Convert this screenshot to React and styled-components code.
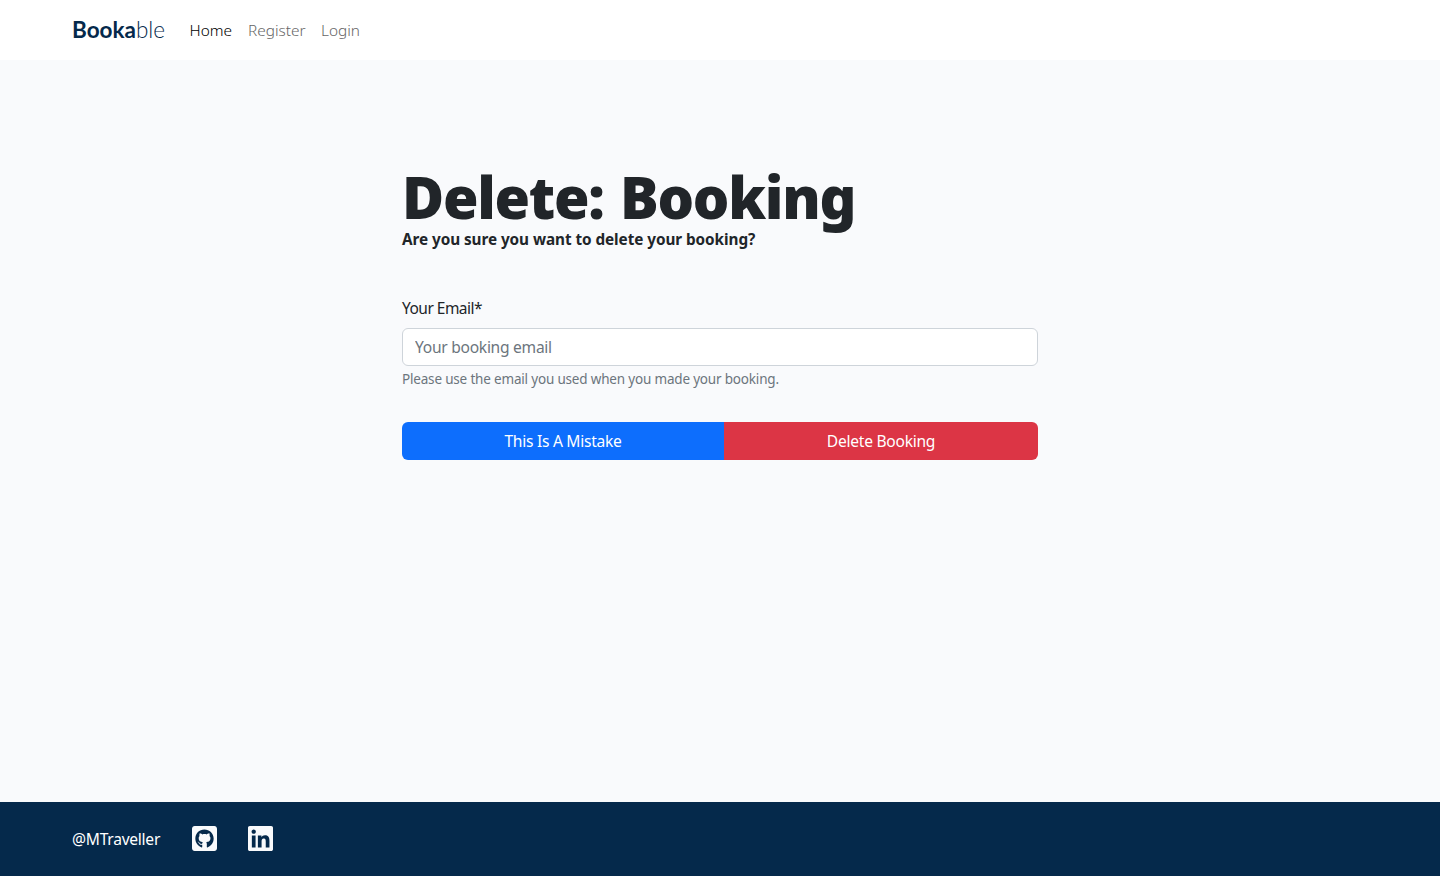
import React from "react";
import styled, { createGlobalStyle } from "styled-components";
import { FaGithubSquare, FaLinkedin } from "react-icons/fa";

const GlobalStyle = createGlobalStyle`
  *, *::before, *::after { box-sizing: border-box; }
  body {
    margin: 0;
    background: #f9fafc;
    color: #212529;
    font-family: "Segoe UI", "Noto Sans", sans-serif;
    font-size: 15.6px;
    line-height: 24px;
  }
`;

const Page = styled.div`
  min-height: 100vh;
  display: flex;
  flex-direction: column;
`;

const Container = styled.div`
  width: 1320px;
  margin: 0 auto;
  padding: 0 12px;
  display: flex;
  align-items: center;
`;

const Header = styled.header`
  height: 60px;
  display: flex;
  background: #fff;
`;

const Brand = styled.a`
  width: 93px;
  margin-right: 16.5px;
  color: #05294b;
  font-family: Lato, sans-serif;
  font-size: 22.5px;
  font-weight: 700;
  line-height: 34px;
  white-space: nowrap;
`;

const BrandLight = styled.span`
  font-weight: 300;
`;

const Nav = styled.nav`
  display: flex;
`;

const NavLink = styled.a`
  width: ${(p) => p.$width}px;
  padding: 9px 8px 7px;
  white-space: nowrap;
  font-size: 15.4px;
  font-weight: 300;
  color: ${(p) => (p.$active ? "#000" : "#666")};
`;

const Main = styled.main`
  flex: 1;
  width: 636px;
  margin: 0 auto;
  padding-top: 107px;
`;

const Title = styled.h1`
  margin: 0;
  font-size: 57.5px;
  font-weight: 900;
  line-height: 60px;
  letter-spacing: -1.25px;
  word-spacing: 2.5px;
  white-space: nowrap;
`;

const Lead = styled.p`
  margin: 0 0 45px;
  font-size: 15.3px;
  letter-spacing: -0.06px;
  font-weight: 700;
`;

const Label = styled.label`
  display: block;
  margin-bottom: 8px;
  font-size: 15.5px;
  letter-spacing: -0.52px;
`;

const Input = styled.input`
  display: block;
  width: 100%;
  height: 38px;
  padding: 6px 12px;
  border: 1px solid #ced4da;
  border-radius: 6px;
  background: #fff;
  font: inherit;
  letter-spacing: -0.28px;
  &::placeholder { color: #6c757d; opacity: 1; }
`;

const Hint = styled.div`
  margin: 3px 0 33px;
  color: #6c757d;
  font-size: 13.5px;
  line-height: 20px;
  letter-spacing: -0.18px;
`;

const ButtonGroup = styled.div`
  display: flex;
  border-radius: 6px;
  overflow: hidden;
`;

const Button = styled.button`
  flex: 0 0 ${(p) => p.$width}px;
  height: 38px;
  padding: 0;
  border: 0;
  background: ${(p) => p.$color};
  color: #fff;
  font: inherit;
  letter-spacing: -0.27px;
`;

const Footer = styled.footer`
  height: 74px;
  display: flex;
  background: #05294b;
  color: #fff;
`;

const Handle = styled.span`
  width: 88px;
  margin-right: 32px;
  letter-spacing: -0.26px;
`;

const SocialLink = styled.a`
  display: flex;
  margin-right: 31px;
  margin-bottom: 1px;
  color: #f9fafc;
  svg { width: 25px; height: 29px; }
`;

export default function App() {
  return (
    <Page>
      <GlobalStyle />
      <Header>
        <Container>
          <Brand>Booka<BrandLight>ble</BrandLight></Brand>
          <Nav>
            <NavLink $active $width={58.5}>Home</NavLink>
            <NavLink $width={73}>Register</NavLink>
            <NavLink $width={56}>Login</NavLink>
          </Nav>
        </Container>
      </Header>
      <Main>
        <Title>Delete: Booking</Title>
        <Lead>Are you sure you want to delete your booking?</Lead>
        <Label htmlFor="email">Your Email*</Label>
        <Input id="email" type="email" placeholder="Your booking email" />
        <Hint>Please use the email you used when you made your booking.</Hint>
        <ButtonGroup>
          <Button $width={322} $color="#0d6efd">This Is A Mistake</Button>
          <Button $width={314} $color="#dc3545">Delete Booking</Button>
        </ButtonGroup>
      </Main>
      <Footer>
        <Container>
          <Handle>@MTraveller</Handle>
          <SocialLink aria-label="GitHub"><FaGithubSquare /></SocialLink>
          <SocialLink aria-label="LinkedIn"><FaLinkedin /></SocialLink>
        </Container>
      </Footer>
    </Page>
  );
}
